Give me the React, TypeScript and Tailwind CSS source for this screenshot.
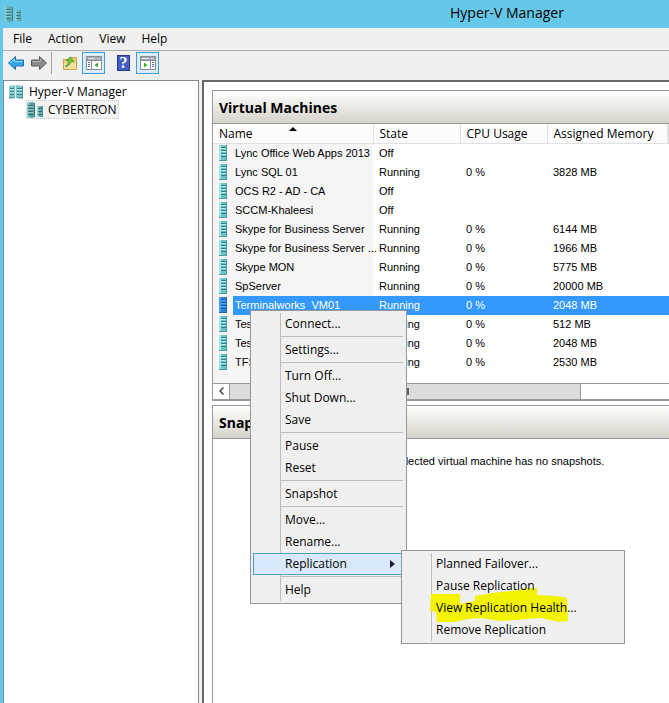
import { useState } from 'react';

type VM = { name: string; state: string; cpu?: string; memory?: string };

const machines: VM[] = [
  { name: 'Lync Office Web Apps 2013', state: 'Off' },
  { name: 'Lync SQL 01', state: 'Running', cpu: '0 %', memory: '3828 MB' },
  { name: 'OCS R2 - AD - CA', state: 'Off' },
  { name: 'SCCM-Khaleesi', state: 'Off' },
  { name: 'Skype for Business Server', state: 'Running', cpu: '0 %', memory: '6144 MB' },
  { name: 'Skype for Business Server ...', state: 'Running', cpu: '0 %', memory: '1966 MB' },
  { name: 'Skype MON', state: 'Running', cpu: '0 %', memory: '5775 MB' },
  { name: 'SpServer', state: 'Running', cpu: '0 %', memory: '20000 MB' },
  { name: 'Terminalworks  VM01', state: 'Running', cpu: '0 %', memory: '2048 MB' },
  { name: 'Test', state: 'Running', cpu: '0 %', memory: '512 MB' },
  { name: 'Test', state: 'Running', cpu: '0 %', memory: '2048 MB' },
  { name: 'TFS', state: 'Running', cpu: '0 %', memory: '2530 MB' },
];

// Each inner array is a group, groups are split by a line
const contextMenu = [
  ['Connect...'],
  ['Settings...'],
  ['Turn Off...', 'Shut Down...', 'Save'],
  ['Pause', 'Reset'],
  ['Snapshot'],
  ['Move...', 'Rename...', 'Replication'],
  ['Help'],
];

const replicationMenu = ['Planned Failover...', 'Pause Replication', 'View Replication Health...', 'Remove Replication'];

const ServerIcon = ({ selected = false }: { selected?: boolean }) => (
  <svg width="8" height="16" viewBox="0 0 8 16" className="shrink-0" aria-hidden="true">
    <rect width="8" height="16" fill={selected ? '#2f86dc' : '#6cc3c6'} />
    <rect width="2" height="16" fill={selected ? '#4b9fec' : '#a6e4e4'} />
    <path d="M7.5 0v16M0 15.5h8" stroke={selected ? '#1f68b5' : '#4b9a9f'} />
    <path d="M2 2.5h5M2 5.5h5M2 8.5h5M2 11.5h5" stroke={selected ? '#1c5fa8' : '#2f8087'} />
    <path d="M2 3.5h5M2 6.5h5M2 9.5h5" stroke={selected ? '#56a6f0' : '#b5ecec'} />
  </svg>
);

const HostIcon = () => (
  <svg width="17" height="16" viewBox="0 0 17 16" className="shrink-0" aria-hidden="true">
    <path d="M0 1l5-1 3 1v14l-3 1-5-1z" fill="#5aa3a5" />
    <path d="M0 1l2-.5v15L0 15z" fill="#93cccb" />
    <path d="M1 3.5h5M1 6.5h5M1 9.5h5M1 12.5h5" stroke="#2d6f73" />
    <path d="M2 4.5h4M2 7.5h4M2 10.5h4" stroke="#8cc8c8" />
    <path d="M7.500 1v14" stroke="#34777b" />
    <rect x="10" y="4" width="6" height="11" fill="#66adaf" />
    <rect x="10" y="4" width="2" height="11" fill="#9bd2d0" />
    <path d="M11 6.5h4M11 9.5h4M11 12.5h4" stroke="#2d6f73" />
    <path d="M15.5 4v11" stroke="#4b8f92" />
  </svg>
);

const ManagerIcon = () => (
  <svg width="14" height="14" viewBox="0 0 14 14" className="shrink-0" aria-hidden="true">
    <path d="M0 1l6-1v13l-6 1zM7 0l7 1v13l-7-1z" fill="#7fc9cc" />
    <path d="M6.500 0v13" stroke="#d8f2f1" />
    <path d="M1 3.500h4M1 6.500h4M1 9.500h4M8 3.500h5M8 6.500h5M8 9.500h5" stroke="#358087" />
    <path d="M1 4.500h4M1 7.500h4M8 4.500h5M8 7.500h5" stroke="#b5e6e6" />
    <path d="M0 12.500h6M8 12.500h6M13.500 1v12" stroke="#4a989c" />
  </svg>
);

const ArrowIcon = ({ forward = false }: { forward?: boolean }) => (
  <svg width="18" height="16" viewBox="0 0 18 16" aria-hidden="true">
    <path
      d={forward ? 'M16.5 8 9.5 1.5V5H1.5v6h8v3.500z' : 'M1.500 8 8.500 1.500V5h8v6h-8v3.500z'}
      fill={forward ? '#8b8b8b' : '#35a7e8'}
      stroke={forward ? '#5d5d5d' : '#1c6fae'}
      strokeLinejoin="round"
    />
    <path d={forward ? 'M2.500 6.500h8V4' : 'M3.500 7.500 7.500 4v2.500h8'} fill="none" stroke={forward ? '#b5b5b5' : '#8fdcff'} />
  </svg>
);

const FolderUpIcon = () => (
  <svg width="16" height="16" viewBox="0 0 16 16" aria-hidden="true">
    <path d="M1.500 4.500h7l1-2h5v12h-13z" fill="#f0cf7c" stroke="#cda552" />
    <path d="M2 8h12v6H2z" fill="#f8e0a0" />
    <path d="M3 11.500c3 0 5.500-2 6-5H12L8.500 2 4 5.500h2.500c0 2.500-1 4.500-3.500 6z" fill="#6cc73f" stroke="#3d9426" strokeWidth=".7" />
  </svg>
);

const PaneIcon = ({ right = false }: { right?: boolean }) => (
  <svg width="16" height="14" viewBox="0 0 16 14" aria-hidden="true">
    <rect x=".5" y=".5" width="15" height="13" fill="#fff" stroke="#8a8d94" />
    <path d="M1 1h14v3H1z" fill="#a3a8b3" />
    <path d="M2 2.500h7M11 2.500h1M13 2.500h1" stroke="#e4e7ec" />
    <path d="M1 4.500h14" stroke="#8a8d94" />
    <path d={right ? 'M10.500 5v8' : 'M5.500 5v8'} stroke="#8a8d94" />
    <path d={right ? 'M12 6.500h2M12 8.500h2M12 10.500h2' : 'M2 6.500h2M2 8.500h2M2 10.500h2'} stroke="#4c78b8" />
    <path d={right ? 'M4 6.500v5L7.500 9z' : 'M12 6.500v5L8.500 9z'} fill="#3fae2a" />
  </svg>
);

const HelpIcon = () => (
  <span className="flex h-4 w-[13px] items-center justify-center border border-[#24388f] bg-[#4460c4] font-['Liberation_Serif',serif] text-base leading-4 font-bold text-white">
    ?
  </span>
);

const PanelTitle = ({ children }: { children: string }) => (
  <h2 className="h-[33px] border-b border-[#999] bg-linear-to-b from-white to-[#d6d3cb] pl-1.5 text-sm leading-[33px] font-bold">
    {children}
  </h2>
);

const MenuItem = ({ label, open = false }: { label: string; open?: boolean }) => (
  <button
    role="menuitem"
    aria-haspopup={open ? 'menu' : undefined}
    className={`relative flex h-[22px] w-full items-center justify-between border pl-[31px] text-left ${open ? 'border-[#4aa0cf] bg-[#d9e9fc] pr-2' : 'border-transparent'}`}
  >
    {label}
    {open && (
      <svg width="5" height="8" viewBox="0 0 5 8" aria-hidden="true">
        <path d="M0 0v8l5-4z" fill="#1b1b35" />
      </svg>
    )}
  </button>
);

const columns = ['Name', 'State', 'CPU Usage', 'Assigned Memory', ''];

export default function App() {
  const [selected, setSelected] = useState(8);

  return (
    <div className="relative flex min-h-screen flex-col overflow-hidden bg-[#66c8e9] pl-[3px] font-['Open_Sans','Noto_Sans',sans-serif] text-xs text-black">
      <header className="flex h-7 items-center pl-0.5">
        <span className="opacity-80"><HostIcon /></span>
        <h1 className="flex-1 pb-0.5 pl-[428px] text-sm leading-5">Hyper-V Manager</h1>
      </header>

      <nav className="flex h-[23px] items-center border-b border-[#adadad] bg-[#f0f0f0] pl-0.5">
        {['File', 'Action', 'View', 'Help'].map((item) => (
          <button key={item} className="px-2 leading-5">{item}</button>
        ))}
      </nav>

      <div className="flex h-[29px] items-start bg-[#f0f0f0] pt-px pl-1">
        <div className="flex h-[22px] items-center gap-[5px]">
          <button aria-label="Back"><ArrowIcon /></button>
          <button aria-label="Forward"><ArrowIcon forward /></button>
        </div>
        <span className="ml-[3px] h-[22px] w-px bg-[#a0a0a0]" />
        <button aria-label="Up" className="ml-2.5 flex h-[22px] items-center"><FolderUpIcon /></button>
        <button aria-label="Show console tree" className="ml-1 flex h-[22px] w-[23px] items-center justify-center border border-[#3c9fd8] bg-[#dcebf8]">
          <PaneIcon />
        </button>
        <button aria-label="Help" className="ml-3 flex h-[22px] items-center"><HelpIcon /></button>
        <button aria-label="Show action pane" className="ml-1.5 flex h-[22px] w-[23px] items-center justify-center border border-[#3c9fd8] bg-[#dcebf8]">
          <PaneIcon right />
        </button>
      </div>

      <div className="flex flex-1 bg-[#f0f0f0]">
        <aside className="w-[196px] shrink-0 border border-b-0 border-[#828790] bg-white pt-0.5 pl-[5px]">
          <div className="flex h-[17px] items-center gap-1.5">
            <ManagerIcon />
            Hyper-V Manager
          </div>
          <button className="ml-[17px] flex h-[19px] items-center gap-1 border border-dotted border-[#c8c8c8] bg-[#f3f3f3] pr-0.5">
            <HostIcon />
            CYBERTRON
          </button>
        </aside>

        <main className="ml-[3px] flex min-w-0 flex-1 flex-col gap-1 border-t-2 border-l-2 border-[#696969] bg-white pt-2 pl-2">
          <section className="border border-r-0 border-[#999]">
            <PanelTitle>Virtual Machines</PanelTitle>
            <table className="w-full table-fixed border-collapse">
              <colgroup>
                <col className="w-[160px]" />
                <col className="w-[87px]" />
                <col className="w-[87px]" />
                <col className="w-[120px]" />
                <col />
              </colgroup>
              <thead>
                <tr className="h-[19px] bg-[#fcfcfc]">
                  {columns.map((col, i) => (
                    <th key={i} className="relative border-r border-b border-[#e0e0e0] p-0 pt-0.5 pl-1.5 text-left leading-4 font-normal whitespace-nowrap">
                      {col}
                      {i === 0 && (
                        <svg width="8" height="4" viewBox="0 0 8 4" className="absolute top-[3px] left-[76px]" aria-hidden="true">
                          <path d="M0 4h8L4 0z" />
                        </svg>
                      )}
                    </th>
                  ))}
                </tr>
              </thead>
              <tbody className="font-['Liberation_Sans',Arial,sans-serif] text-[11px]">
                {machines.map((vm, i) => {
                  const active = i === selected;
                  const cell = active ? 'bg-[#3399ff] text-white' : '';
                  return (
                    <tr key={i} className="h-[19px] whitespace-pre" onClick={() => setSelected(i)}>
                      <td className="bg-[#f5f5f5] p-0">
                        <div className="flex h-[19px] items-center pl-1.5">
                          <ServerIcon selected={active} />
                          <span className={`ml-1.5 flex-1 pl-0.5 leading-[19px] ${cell}`}>{vm.name}</span>
                        </div>
                      </td>
                      <td className={`p-0 pl-1.5 ${cell}`}>{vm.state}</td>
                      <td className={`p-0 pl-1.5 ${cell}`}>{vm.cpu}</td>
                      <td className={`p-0 pl-1.5 ${cell}`}>{vm.memory}</td>
                      <td className={`p-0 ${cell}`} />
                    </tr>
                  );
                })}
              </tbody>
            </table>
            <div className="h-[11px] w-[160px] bg-[#f5f5f5]" />
            <div className="flex h-[17px] border-t border-b border-[#999] bg-white">
              <button aria-label="Scroll left" className="flex w-[17px] items-center justify-center border-r border-[#999]">
                <svg width="5" height="8" viewBox="0 0 5 8" fill="none" stroke="#444" strokeWidth="1.500" aria-hidden="true">
                  <path d="M4.500.5 1 4l3.500 3.500" />
                </svg>
              </button>
              <div className="flex-1">
                <div className="flex h-full w-4/5 items-center justify-center gap-px border-r border-[#999] bg-[#dcdcdc]">
                  <span className="h-[7px] w-0.5 bg-[#606060]" />
                  <span className="h-[7px] w-0.5 bg-[#606060]" />
                  <span className="h-[7px] w-0.5 bg-[#606060]" />
                </div>
              </div>
            </div>
          </section>

          <section className="flex-1 border border-r-0 border-b-0 border-[#999]">
            <PanelTitle>Snapshots</PanelTitle>
            <p className="pt-3.5 pl-[159px] font-['Liberation_Sans',Arial,sans-serif] text-[11px] leading-4">
              The selected virtual machine has no snapshots.
            </p>
          </section>
        </main>
      </div>

      <div role="menu" className="absolute top-[310px] left-[250px] w-[157px] border border-[#979797] bg-[#f0f0f0] p-0.5">
        <span className="absolute inset-y-0.5 left-[29px] w-px bg-[#bdbdbd]" />
        {contextMenu.map((group, i) => (
          <div key={i}>
            {i > 0 && (
              <div role="separator" className="h-1 pt-px pr-px pl-7">
                <div className="h-px bg-[#bdbdbd]" />
              </div>
            )}
            {group.map((label) => (
              <MenuItem key={label} label={label} open={label === 'Replication'} />
            ))}
          </div>
        ))}
      </div>

      <div role="menu" className="absolute top-[550px] left-[401px] w-[224px] border border-[#979797] bg-[#f0f0f0] p-0.5">
        <span className="absolute inset-y-0.5 left-[29px] w-px bg-[#bdbdbd]" />
        {/* marker stroke over the health entry */}
        <svg width="140" height="34" viewBox="0 0 140 34" className="absolute top-[37px] left-7" aria-hidden="true">
          <path
            d="M1 6h29v10l15-3V8l17-3 26-3 8-2h11v7l18 1 12 2 1 23-9 1-18-4-14 1-26 2-20-3-14 1-17 4-13 1-1-12-6-1z"
            fill="#f3f300"
          />
        </svg>
        {replicationMenu.map((label) => (
          <MenuItem key={label} label={label} />
        ))}
      </div>
    </div>
  );
}
